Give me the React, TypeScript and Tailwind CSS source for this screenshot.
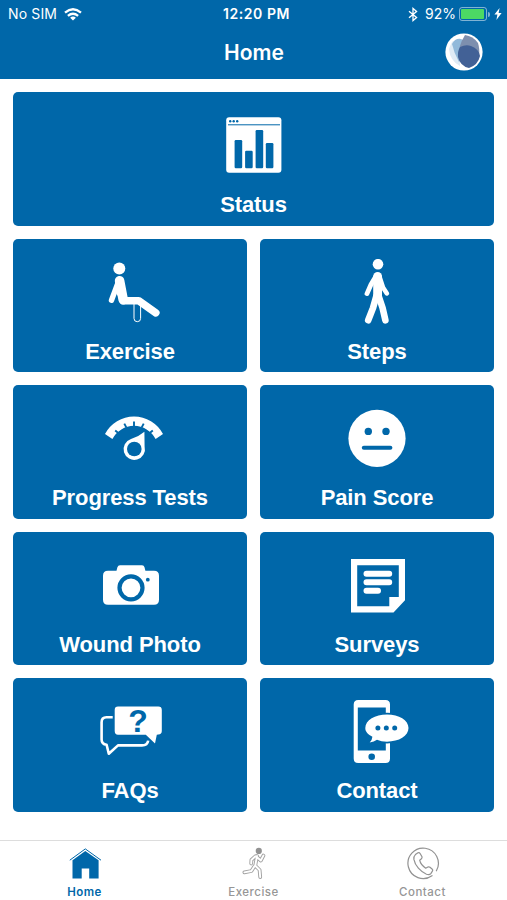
import React from 'react';

const BLUE = '#0067a9';

// Tile icons share one box: x is measured from the tile centre, y from the tile top
const TileIcon: React.FC<{ children: React.ReactNode }> = ({ children }) => (
  <svg viewBox="-36 20 72 68" className="h-[68px] w-[72px]" fill="white">
    {children}
  </svg>
);

const StatusIcon = () => (
  <TileIcon>
    <rect x="-27.8" y="25.3" width="55.2" height="55.5" rx="3" />
    <path d="M-26 32.8H26" stroke={BLUE} strokeWidth="1" />
    <g fill={BLUE}>
      <circle cx="-23.8" cy="29.2" r="1.2" />
      <circle cx="-20.3" cy="29.2" r="1.2" />
      <circle cx="-16.8" cy="29.2" r="1.2" />
      <rect x="-19.4" y="48" width="7.6" height="28.3" rx="1.2" />
      <rect x="-8.9" y="58.7" width="7.6" height="17.6" rx="1.2" />
      <rect x="1.6" y="38" width="7.6" height="38.3" rx="1.2" />
      <rect x="11.8" y="51" width="7.6" height="25.3" rx="1.2" />
    </g>
  </TileIcon>
);

const SeatedIcon = () => (
  <TileIcon>
    <circle cx="-10.7" cy="29.4" r="6" />
    <g fill="none" stroke="white" strokeLinecap="round" strokeLinejoin="round">
      <path d="M-11.5 42.5L-18.5 61.2" strokeWidth="5.4" />
      <path d="M-10.4 41.8L-6.8 60.7" strokeWidth="9.6" />
      <path d="M-6.5 61.7H8.6L25.8 73.8" strokeWidth="7.6" />
      <path d="M4 65V79.4a3.3 3.3 0 0 0 6.6 0V67" strokeWidth="1" />
    </g>
    <path d="M-13 46L-9 61L-13.5 55Z" />
  </TileIcon>
);

const WalkIcon = () => (
  <TileIcon>
    <circle cx="1" cy="25.2" r="5.3" />
    <g fill="none" stroke="white" strokeLinecap="round" strokeLinejoin="round">
      <path d="M0.6 37.3V57" strokeWidth="8.8" />
      <path d="M-1.2 37.5L-6 45.5L-10 54.6" strokeWidth="4.8" />
      <path d="M2.4 37.5L6 48.5L9.9 54.4" strokeWidth="4.6" />
      <path d="M-0.6 57L-4 69L-8.8 81.3" strokeWidth="6.6" />
      <path d="M1.6 57L5.6 69L8.4 81.3" strokeWidth="6.6" />
    </g>
  </TileIcon>
);

const GaugeIcon = () => (
  <TileIcon>
    <path d="M-25 49.1A32.8 32.8 0 0 1 33 49.1L25.6 54A24.3 24.3 0 0 0 -17.6 54Z" />
    <path
      d="M-14.8 45.4L-11.4 48.2M-5.7 38.6L-3.6 42.6M4 36.6V41.4M13.7 38.6L11.6 42.6M22.8 45.4L19.4 48.2"
      stroke={BLUE}
      strokeWidth="1.9"
    />
    <path d="M14.4 46.8L14.6 61.5A10.7 10.7 0 1 1 1 54Q8.6 51.8 14.4 46.8Z" />
    <circle cx="4.3" cy="64" r="7.3" fill={BLUE} />
  </TileIcon>
);

const FaceIcon = () => (
  <TileIcon>
    <circle cx="0" cy="53.4" r="28.6" />
    <circle cx="-8.7" cy="46.4" r="3.7" fill={BLUE} />
    <circle cx="9" cy="46.4" r="3.7" fill={BLUE} />
    <path d="M-13.2 62.8H13.4" stroke={BLUE} strokeWidth="4" strokeLinecap="round" />
  </TileIcon>
);

const CameraIcon = () => (
  <TileIcon>
    <path d="M-22 38.7H-13.5L-12.6 35.2Q-12 33.3 -10 33.3H12Q14 33.3 14.5 35.2L15.4 38.7H24Q29 38.7 29 43.7V67.7Q29 72.7 24 72.7H-22Q-27 72.7 -27 67.7V43.7Q-27 38.7 -22 38.7Z" />
    <circle cx="1" cy="55.8" r="11.5" stroke={BLUE} strokeWidth="4.2" />
    <circle cx="17.8" cy="47.7" r="1.9" fill={BLUE} />
  </TileIcon>
);

const NoteIcon = () => (
  <TileIcon>
    <path fillRule="evenodd" d="M-26 27H28V68.2L16.5 80.5H-26ZM-19.8 33.2V74.2H12.3V65H21.8V33.2Z" />
    <path d="M-10.5 41.7H12.2M-10.5 50.2H12.2M-10.5 58.7H1" stroke="white" strokeWidth="6" strokeLinecap="round" />
  </TileIcon>
);

const FaqIcon = () => (
  <TileIcon>
    <path
      d="M-17.3 39.3H-23.5Q-28.4 39.3 -28.4 44.3V61.5Q-28.4 66.2 -23.4 66.8L-21.2 75.8L-12 67.4H12Q17.5 67.4 18.2 62.6"
      fill="none"
      stroke="white"
      strokeWidth="2.6"
      strokeLinejoin="round"
    />
    <path d="M-12 28.6H28.3Q31.8 28.6 31.8 32V53Q31.8 56.4 28.3 56.6L26.8 56.7L25 65.6L15.8 56.7H-12Q-15.3 56.7 -15.3 53V32Q-15.3 28.6 -12 28.6Z" />
    <text x="8" y="54.4" textAnchor="middle" fill={BLUE} className="font-['Liberation_Sans',sans-serif] text-[32px] font-bold">
      ?
    </text>
  </TileIcon>
);

const PhoneChatIcon = () => (
  <TileIcon>
    <path fillRule="evenodd" d="M-18.8 22.1H8.5Q13 22.1 13 26.6V80.4Q13 84.9 8.5 84.9H-18.8Q-23.3 84.9 -23.3 80.4V26.6Q-23.3 22.1 -18.8 22.1ZM-19.2 29.4V72.6H8.8V29.4Z" />
    <circle cx="-5.3" cy="78.8" r="3.3" fill={BLUE} />
    <path
      d="M10 36.5C22 36.5 31.5 42 31.5 50.1C31.5 58 22 63.7 10 63.7C6 63.7 3 63.1 0 61.8Q-3 64 -7.3 64.4Q-4.8 62 -4.6 58.8C-9 56.5 -11.7 54 -11.7 50.1C-11.7 42 -2 36.5 10 36.5Z"
      stroke={BLUE}
      strokeWidth="3.4"
      paintOrder="stroke"
    />
    <g fill={BLUE}>
      <circle cx="0.9" cy="50.1" r="2.5" />
      <circle cx="9.3" cy="50.1" r="2.5" />
      <circle cx="17.7" cy="50.1" r="2.5" />
    </g>
  </TileIcon>
);

const HomeTabIcon = () => (
  <svg viewBox="-17 0 34 34" className="h-[34px] w-[34px]" fill={BLUE}>
    <path d="M-12.5 14.3L0.3 5L13.6 14.3V32.4H4.2V22.5H-3.3V32.4H-12.5Z" />
    <path d="M-15.2 14.2L0.3 2.9L16 14.2" fill="none" stroke={BLUE} strokeWidth="1" />
  </svg>
);

const runnerLimbs = 'M3.6 10L1.8 20M2 10.3L-2 14L-2.2 17.5M4 11.5L7.4 14.5L10 9.6M1.2 20L-2 25L-9 26.4M2.2 20L6.2 24L6.8 31';

const RunTabIcon = () => (
  <svg viewBox="-17 0 34 34" className="h-[34px] w-[34px]" fill="none" strokeLinecap="round" strokeLinejoin="round">
    <path d={runnerLimbs} stroke="#a3a3a3" strokeWidth="3.8" transform="translate(-.6 0)" />
    <path d={runnerLimbs} stroke="#ffffff" strokeWidth="1.9" transform="translate(-.6 0)" />
    <circle cx="4.8" cy="4.9" r="3.1" fill="#929292" />
  </svg>
);

const CallTabIcon = () => (
  <svg viewBox="-17 0 34 34" className="h-[34px] w-[34px]" fill="none" stroke="#929292" strokeWidth="1.2" strokeLinecap="round" strokeLinejoin="round">
    <path d="M9 29.7A15.2 15.2 0 1 1 13.4 24.8" />
    <path d="M-7.6 8.6L-5 6.8Q-3.7 6.3 -2.9 7.5L-1 10.8Q-.6 12 -1.8 13L-3.3 14.2Q-2.5 18.7 2.7 22.2L4.9 21Q6 20.5 7 21.3L9.3 23.2Q10.2 24.1 9.4 25.2L8 27.3Q6.5 29.3 3.5 28.2C-2.5 25.8 -8 19.6 -9.1 13.4Q-9.4 10.3 -7.6 8.6Z" />
  </svg>
);

const WifiIcon = () => (
  <svg viewBox="0 0 18 13" className="ml-[7px] h-[13px] w-[18px]" fill="none" stroke="white" strokeWidth="2.3">
    <path d="M1 4.6Q9 -2.2 17 4.6" />
    <path d="M3.9 7.8Q9 3.6 14.1 7.8" />
    <path d="M6.1 9.7Q9 7.5 11.9 9.7L9 12.5Z" fill="white" stroke="none" />
  </svg>
);

const BluetoothIcon = () => (
  <svg viewBox="0 0 10 15" className="mr-[7px] h-[15px] w-[10px]" fill="none" stroke="white" strokeWidth="1.3">
    <path d="M1 4.2L8.6 10.6L5 13.6V1.4L8.6 4.4L1 10.8" />
  </svg>
);

const tiles = [
  { label: 'Status', Icon: StatusIcon, wide: true },
  { label: 'Exercise', Icon: SeatedIcon },
  { label: 'Steps', Icon: WalkIcon },
  { label: 'Progress Tests', Icon: GaugeIcon },
  { label: 'Pain Score', Icon: FaceIcon },
  { label: 'Wound Photo', Icon: CameraIcon },
  { label: 'Surveys', Icon: NoteIcon },
  { label: 'FAQs', Icon: FaqIcon },
  { label: 'Contact', Icon: PhoneChatIcon },
];

const tabs = [
  { label: 'Home', Icon: HomeTabIcon, active: true },
  { label: 'Exercise', Icon: RunTabIcon, active: false },
  { label: 'Contact', Icon: CallTabIcon, active: false },
];

export default function App() {
  return (
    <div className="flex h-[900px] w-[507px] flex-col overflow-hidden bg-white font-['Inter',sans-serif]">
      {/* Header */}
      <header className="h-[79px] shrink-0 bg-[#0067a9] text-white">
        <div className="grid h-7 grid-cols-[1fr_auto_1fr] items-center pl-2 pr-[5px] text-[14px] leading-none">
          <div className="flex items-center">
            <span className="tracking-[0.15px]">No SIM</span>
            <WifiIcon />
          </div>
          <span className="pl-[3px] font-semibold tracking-[0.55px]">12:20 PM</span>
          <div className="flex items-center justify-end">
            <BluetoothIcon />
            <span>92%</span>
            <div className="ml-[3px] h-[14px] w-7 rounded-[3px] border border-white/50 p-px">
              <div className="h-full w-[94%] rounded-[1px] bg-[#4cd964]" />
            </div>
            <div className="ml-px h-[5px] w-[2px] rounded-r bg-white/50" />
            <svg viewBox="0 0 8 12" className="ml-1 h-3 w-2" fill="white">
              <path d="M5.6 0L0.4 6.6H3.4L2.4 12L7.6 5H4.6Z" />
            </svg>
          </div>
        </div>
        <div className="grid h-12 grid-cols-[1fr_auto_1fr] items-center pr-6">
          <h1 className="col-start-2 pl-[25px] text-[21px] font-semibold leading-none tracking-[0.1px]">Home</h1>
          <svg viewBox="-19 -19 38 38" className="h-[38px] w-[38px] justify-self-end">
            <circle r="18.6" fill="white" />
            <path d="M-15 -3Q-13 -9 -11 -11L-4 -8L-4 14Q-14 9 -15 -3Z" fill="#dfebf5" />
            <path d="M-12 -8Q-9 -14 -3 -13L3 -10L-5 10Q-10 1 -12 -8Z" fill="#91b9da" />
            <path d="M1 -17Q9 -16 14 -9Q16 -2 15 2L-5 5Q-6 -6 1 -17Z" fill="#7d8fae" />
            <path d="M-4 -5Q2 -8 7 -6Q15 -3 16 4Q14 13 5 16Q-4 14 -6 5Q-6.5 -1 -4 -5Z" fill="#426196" />
          </svg>
        </div>
      </header>

      {/* Tiles */}
      <main className="grid flex-1 auto-rows-[133.6px] grid-cols-2 gap-[13px] px-[13px] pt-[13px]">
        {tiles.map(({ label, Icon, wide }) => (
          <button
            key={label}
            className={`flex flex-col items-center rounded-[5px] bg-[#0067a9] pt-5 ${wide ? 'col-span-2' : ''}`}
          >
            <Icon />
            <span className="mt-[11px] font-['Liberation_Sans',sans-serif] text-[22px] font-bold leading-7 tracking-[-0.1px] text-white">
              {label}
            </span>
          </button>
        ))}
      </main>

      {/* Tab bar */}
      <nav className="grid h-[60px] shrink-0 grid-cols-3 border-t border-[#dddddd] bg-white pt-[5px]">
        {tabs.map(({ label, Icon, active }) => (
          <button key={label} className="flex flex-col items-center">
            <Icon />
            <span
              className={`mt-1 text-[11.5px] leading-4 tracking-[0.5px] ${
                active ? 'font-semibold text-[#0067a9]' : 'font-medium text-[#969696]'
              }`}
            >
              {label}
            </span>
          </button>
        ))}
      </nav>
    </div>
  );
}
